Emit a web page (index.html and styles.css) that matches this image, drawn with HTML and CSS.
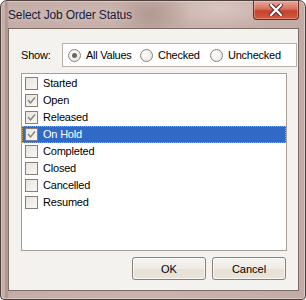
FILE: index.html
```html
<!DOCTYPE html>
<html>
<head>
    <title>Select Job Order Status</title>
    <link rel="stylesheet" href="styles.css">
</head>
<body>
    <div class="window">
        <div class="titlebar">
            <span class="title">Select Job Order Status</span>
            <div class="close-btn">
                <svg width="14" height="12" viewBox="0 0 14 12">
                    <path d="M2 1 L12 11 M12 1 L2 11" stroke="#4a2a2a" stroke-width="4.2" stroke-linecap="round"/>
                    <path d="M2 1 L12 11 M12 1 L2 11" stroke="#ffffff" stroke-width="2.4" stroke-linecap="round"/>
                </svg>
            </div>
        </div>

        <div class="client">
            <div class="show-row">
                <span class="show-label">Show:</span>
                <div class="radio-box">
                    <label class="radio radio-all"><span class="circle checked"></span>All Values</label>
                    <label class="radio radio-checked"><span class="circle"></span>Checked</label>
                    <label class="radio"><span class="circle"></span>Unchecked</label>
                </div>
            </div>

            <div class="list">
                <div class="item"><span class="box"></span>Started</div>
                <div class="item"><span class="box"><svg width="11" height="11" viewBox="0 0 11 11"><polyline points="2,5 4.5,8 9,2.5" fill="none" stroke="#8a7e76" stroke-width="1.4"/></svg></span>Open</div>
                <div class="item"><span class="box"><svg width="11" height="11" viewBox="0 0 11 11"><polyline points="2,5 4.5,8 9,2.5" fill="none" stroke="#8a7e76" stroke-width="1.4"/></svg></span>Released</div>
                <div class="item selected"><span class="box"><svg width="11" height="11" viewBox="0 0 11 11"><polyline points="2,5 4.5,8 9,2.5" fill="none" stroke="#8a7e76" stroke-width="1.4"/></svg></span>On Hold</div>
                <div class="item"><span class="box"></span>Completed</div>
                <div class="item"><span class="box"></span>Closed</div>
                <div class="item"><span class="box"></span>Cancelled</div>
                <div class="item"><span class="box"></span>Resumed</div>
            </div>

            <div class="buttons">
                <div class="btn">OK</div>
                <div class="btn">Cancel</div>
            </div>
        </div>
    </div>
</body>
</html>
```

FILE: styles.css
```css
body { margin: 0; background-color: #ffffff; font-family: "Liberation Sans", Arial, sans-serif; }

.window {
    box-sizing: border-box;
    width: 306px;
    height: 300px;
    border: 1px solid #4e403c;
    border-radius: 7px 7px 4px 4px;
    padding: 0 6px 8px 7px;
    display: flex;
    flex-direction: column;
    background:
        radial-gradient(ellipse 40px 30px at 150px 14px, rgba(150,120,112,0.45), rgba(150,120,112,0)),
        radial-gradient(ellipse 60px 20px at 220px 8px, rgba(235,220,214,0.5), rgba(235,220,214,0)),
        linear-gradient(to right, #b49c95 0px, #cdb9b2 3px, #a88f88 5px, #c4ada6 8px, #c9b4ad 50%, #c2aba4 100%);
    box-shadow: inset 0 0 0 1px rgba(255,255,255,0.35);
}

.titlebar {
    height: 27px;
    display: flex;
    align-items: flex-start;
    justify-content: space-between;
}

.title {
    margin-top: 7px;
    font-size: 12px;
    line-height: 14px;
    color: #1a1a38;
    letter-spacing: -0.15px;
    text-shadow: 0 0 6px rgba(255,255,255,0.6);
}

.close-btn {
    width: 44px;
    height: 18px;
    border: 1px solid #6a2e24;
    border-top: none;
    border-radius: 0 0 4px 4px;
    background: linear-gradient(to bottom, #e9a898 0%, #d8705c 45%, #c5432b 55%, #d25a40 100%);
    box-shadow: inset 0 0 0 1px rgba(255,220,210,0.35);
    display: flex;
    align-items: center;
    justify-content: center;
}

.client {
    flex: 1;
    border: 1px solid #7d6c66;
    background-color: #f4f2ee;
    display: flex;
    flex-direction: column;
    font-size: 11px;
    color: #000;
}

.show-row {
    display: flex;
    align-items: center;
    margin-top: 14px;
    padding-left: 12px;
}

.show-label { width: 41px; letter-spacing: -0.2px; }

.radio-box {
    box-sizing: border-box;
    width: 235px;
    height: 24px;
    border: 1px solid #b8b0a8;
    background-color: #ffffff;
    display: flex;
    align-items: center;
    padding-left: 5px;
}

.radio {
    display: flex;
    align-items: center;
    letter-spacing: -0.25px;
}
.radio-all { width: 72px; }
.radio-checked { width: 70px; }

.circle {
    box-sizing: border-box;
    width: 13px;
    height: 13px;
    border: 1px solid #8c827a;
    border-radius: 50%;
    background: radial-gradient(circle at 40% 40%, #ffffff, #e6e2dc);
    margin-right: 5px;
    display: flex;
    align-items: center;
    justify-content: center;
}
.circle.checked::after {
    content: "";
    width: 5px;
    height: 5px;
    border-radius: 50%;
    background-color: #6e665f;
}

.list {
    box-sizing: border-box;
    margin: 6px 0 0 12px;
    width: 266px;
    height: 178px;
    border: 1px solid #a89e96;
    background-color: #ffffff;
    padding-top: 1px;
}

.item {
    box-sizing: border-box;
    height: 17px;
    line-height: 15px;
    border: 1px solid transparent;
    display: flex;
    align-items: center;
    padding-left: 2px;
    letter-spacing: -0.2px;
}
.item.selected {
    background-color: #3169c6;
    color: #ffffff;
    border: 1px dotted #cfa04a;
}

.box {
    box-sizing: border-box;
    width: 13px;
    height: 13px;
    border: 1px solid #8a7f77;
    background: linear-gradient(to bottom right, #e8e4de, #f8f7f4);
    margin-right: 5px;
    display: flex;
    align-items: center;
    justify-content: center;
}

.buttons {
    display: flex;
    justify-content: flex-end;
    gap: 6px;
    margin: 6px 12px 0 0;
}

.btn {
    box-sizing: border-box;
    width: 74px;
    height: 23px;
    border: 1px solid #8c7f78;
    border-radius: 3px;
    background: linear-gradient(to bottom, #f6f4f1 0%, #efebe5 50%, #e6e0d5 51%, #e9e3d8 100%);
    box-shadow: inset 0 0 0 1px rgba(255,255,255,0.7);
    display: flex;
    align-items: center;
    justify-content: center;
    font-size: 11px;
}
```
